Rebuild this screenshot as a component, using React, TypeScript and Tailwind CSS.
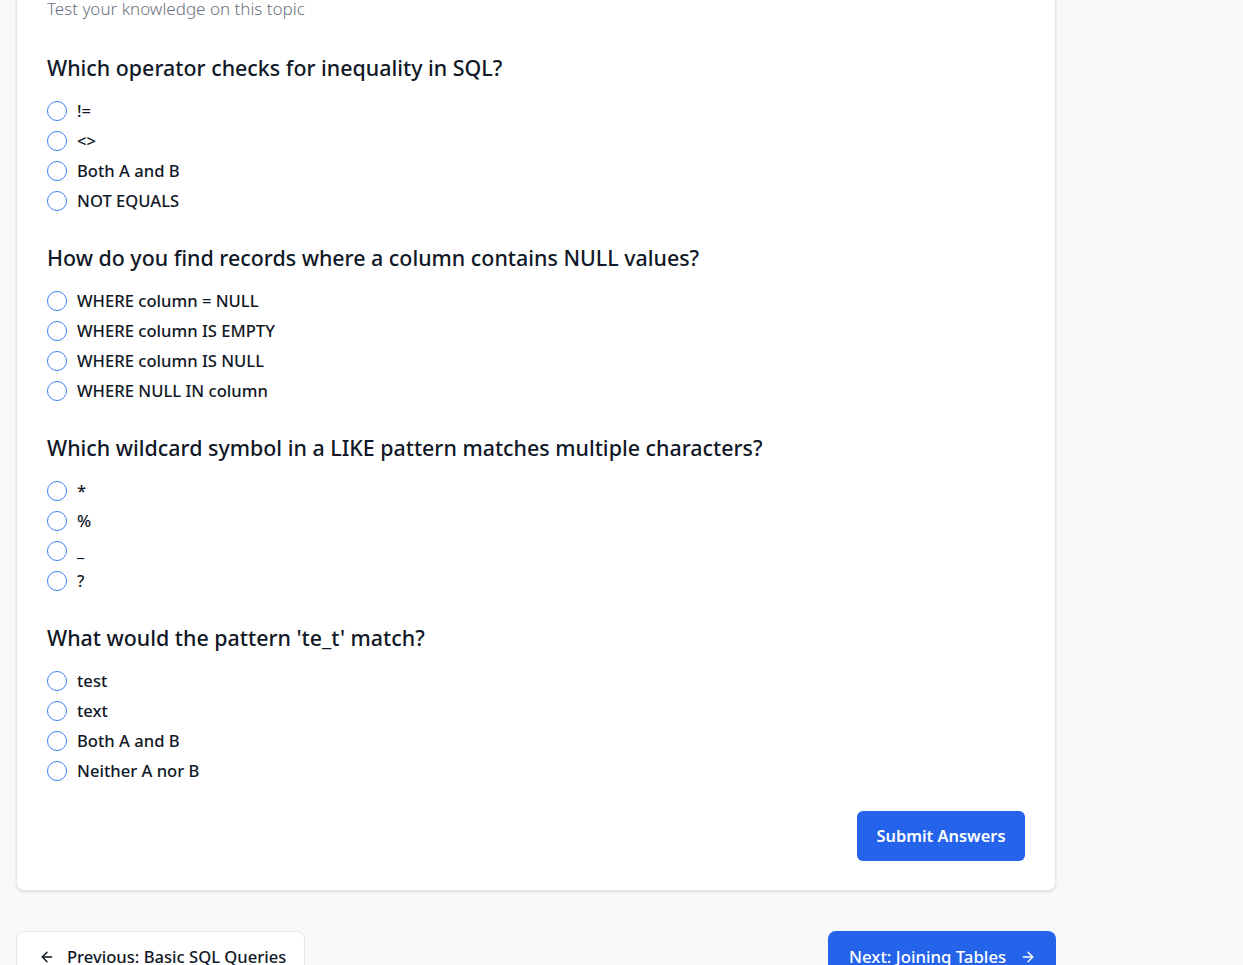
import React from "react";

const questions = [
  {
    q: "Which operator checks for inequality in SQL?",
    options: ["!=", "<>", "Both A and B", "NOT EQUALS"],
  },
  {
    q: "How do you find records where a column contains NULL values?",
    options: ["WHERE column = NULL", "WHERE column IS EMPTY", "WHERE column IS NULL", "WHERE NULL IN column"],
  },
  {
    q: "Which wildcard symbol in a LIKE pattern matches multiple characters?",
    options: ["*", "%", "_", "?"],
  },
  {
    q: "What would the pattern 'te_t' match?",
    options: ["test", "text", "Both A and B", "Neither A nor B"],
  },
];

function ArrowLeft() {
  return (
    <svg width="16" height="16" viewBox="0 0 24 24" fill="none" stroke="currentColor" strokeWidth="2.2" strokeLinecap="round" strokeLinejoin="round">
      <path d="M19 12H5" />
      <path d="M12 19l-7-7 7-7" />
    </svg>
  );
}

function ArrowRight() {
  return (
    <svg width="16" height="16" viewBox="0 0 24 24" fill="none" stroke="currentColor" strokeWidth="2.2" strokeLinecap="round" strokeLinejoin="round">
      <path d="M5 12h14" />
      <path d="M12 5l7 7-7 7" />
    </svg>
  );
}

export default function App() {
  return (
    <div
      className="h-[965px] overflow-hidden bg-[#f8f9fb] text-[#111827]"
      style={{ fontFamily: '"Noto Sans", "Open Sans", sans-serif' }}
    >
      <div className="w-[1040px] ml-4">
        <div className="-mt-[34px] bg-white border border-[#e5e7eb] rounded-lg shadow-sm px-[30px] pt-[30px] pb-[29px]">
          <p className="text-[17px] leading-6 text-[#6b7280] font-light">Test your knowledge on this topic</p>
          <div className="mt-[33px] flex flex-col gap-[31px]">
            {questions.map((item, qi) => (
              <div key={qi}>
                <h3 className="text-[21.4px] leading-7 font-medium mb-[17px]">{item.q}</h3>
                <div className="flex flex-col gap-[6px]">
                  {item.options.map((opt, oi) => (
                    <label key={oi} className="flex items-center h-6 gap-[10px] text-[16.6px] font-medium">
                      <span className="w-5 h-5 rounded-full border-[1.5px] border-[#3b82f6] bg-white shrink-0" />
                      <span>{opt}</span>
                    </label>
                  ))}
                </div>
              </div>
            ))}
          </div>
          <div className="flex justify-end mt-7">
            <button className="h-[50px] w-[168px] rounded-md bg-[#2563eb] text-white text-[16.4px] font-semibold">
              Submit Answers
            </button>
          </div>
        </div>
        <div className="mt-[40px] flex justify-between">
          <button className="flex items-center gap-[12px] h-[52px] w-[289px] pl-[22px] bg-white border border-[#e5e7eb] rounded-lg text-[16.6px] font-medium text-[#111827]">
            <ArrowLeft />
            <span>Previous: Basic SQL Queries</span>
          </button>
          <button className="flex items-center gap-[14px] h-[52px] w-[228px] pl-[21px] bg-[#2563eb] rounded-lg text-[16.8px] font-medium text-white">
            <span>Next: Joining Tables</span>
            <ArrowRight />
          </button>
        </div>
      </div>
    </div>
  );
}
